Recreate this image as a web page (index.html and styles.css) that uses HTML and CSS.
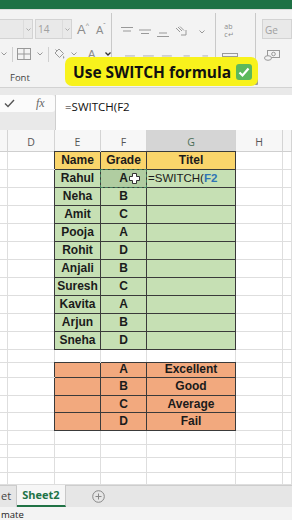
FILE: index.html
```html
<!DOCTYPE html>
<html lang="en">
<head>
    <meta charset="UTF-8">
    <meta name="viewport" content="width=device-width, initial-scale=1.0">
    <title>Use SWITCH formula</title>
    <link rel="stylesheet" href="styles.css">
</head>
<body>
    <div class="titlebar"></div>

    <!-- Ribbon (greyed out while the cell is in edit mode) -->
    <div class="ribbon">
        <div class="group font-group">
            <div class="rrow row-one">
                <div class="combo name-combo"><span class="field"></span><span class="drop"><svg width="5" height="3" viewBox="0 0 5 3"><path d="M0.5 0.5L2.5 2.5L4.5 0.5" fill="none" stroke="#aaa"/></svg></span></div>
                <div class="combo size-combo"><span class="field">14</span><span class="drop"><svg width="5" height="3" viewBox="0 0 5 3"><path d="M0.5 0.5L2.5 2.5L4.5 0.5" fill="none" stroke="#aaa"/></svg></span></div>
                <span class="grow">A<sup>^</sup></span>
                <span class="shrink">A<sup>ˇ</sup></span>
            </div>
            <div class="rrow row-two">
                <svg class="chev" width="6" height="4" viewBox="0 0 6 4"><path d="M0.5 0.5L3 3L5.5 0.5" fill="none" stroke="#999"/></svg>
                <span class="vsep"></span>
                <svg class="icon" width="14" height="12" viewBox="0 0 14 12"><rect x="0.5" y="0.5" width="13" height="11" fill="none" stroke="#999"/><path d="M7 0.5V11.5M0.5 6H13.5" stroke="#999"/></svg>
                <svg class="chev" width="6" height="4" viewBox="0 0 6 4"><path d="M0.5 0.5L3 3L5.5 0.5" fill="none" stroke="#999"/></svg>
                <span class="vsep"></span>
                <svg class="icon" width="12" height="12" viewBox="0 0 12 12"><path d="M2 5L6 1L10.5 5.5L6.5 9.5Z M4 3L2.5 1.5" fill="none" stroke="#999"/><path d="M10.5 7.5C11.5 9 11.5 10 10.8 10.5C10 10.8 9.6 10 10.5 7.5Z" fill="#999"/></svg>
                <svg class="chev" width="6" height="4" viewBox="0 0 6 4"><path d="M0.5 0.5L3 3L5.5 0.5" fill="none" stroke="#999"/></svg>
                <span class="font-color">A</span>
                <svg class="chev dark" width="6" height="4" viewBox="0 0 6 4"><path d="M0.5 0.5L3 3L5.5 0.5" fill="none" stroke="#333" stroke-width="1.3"/></svg>
            </div>
            <div class="glabel">Font</div>
        </div>

        <div class="group align-group">
            <div class="rrow row-one">
                <svg width="12" height="12" viewBox="0 0 12 12"><path d="M0 1.5H12M2 5H10" stroke="#999"/></svg>
                <svg width="12" height="12" viewBox="0 0 12 12"><path d="M0 4H12M2 7.5H10" stroke="#999"/></svg>
                <svg width="12" height="12" viewBox="0 0 12 12"><path d="M2 7H10M0 10.5H12" stroke="#999"/></svg>
                <svg width="12" height="12" viewBox="0 0 12 12"><path d="M1 2L5 6M3 1L7 5M5 0.5L9 4.5M6 9L11 9L11 4" fill="none" stroke="#999"/></svg>
                <svg class="chev" width="6" height="4" viewBox="0 0 6 4"><path d="M0.5 0.5L3 3L5.5 0.5" fill="none" stroke="#999"/></svg>
            </div>
            <div class="rrow row-two">
                <svg width="12" height="12" viewBox="0 0 12 12"><path d="M0 1.5H11M0 4.5H8M0 7.5H11M0 10.5H8" stroke="#aaa"/></svg>
                <svg width="12" height="12" viewBox="0 0 12 12"><path d="M0 1.5H12M2 4.5H10M0 7.5H12M2 10.5H10" stroke="#aaa"/></svg>
                <svg width="12" height="12" viewBox="0 0 12 12"><path d="M1 1.5H12M4 4.5H12M1 7.5H12M4 10.5H12" stroke="#aaa"/></svg>
                <svg width="12" height="12" viewBox="0 0 12 12"><path d="M5 1.5H12M7 4.5H12M7 7.5H12M5 10.5H12" stroke="#aaa"/><path d="M0.5 6H5M2.5 4L0.5 6L2.5 8" fill="none" stroke="#7a9cc6"/></svg>
                <svg width="13" height="12" viewBox="0 0 13 12"><path d="M6 1.5H13M8 4.5H13M8 7.5H13M6 10.5H13" stroke="#aaa"/><path d="M0.5 6H5M3 4L5 6L3 8" fill="none" stroke="#7a9cc6"/></svg>
            </div>
        </div>

        <div class="group wrap-group">
            <div class="rrow row-one">
                <span class="wrap-icon"><span>ab</span><span>c↵</span></span>
            </div>
            <div class="rrow row-two">
                <svg width="16" height="12" viewBox="0 0 16 12"><rect x="0.5" y="0.5" width="15" height="11" fill="none" stroke="#999"/><path d="M0.5 3.5H15.5M0.5 8.5H15.5" stroke="#999"/><path d="M3 6H13M5 4.5L3 6L5 7.5M11 4.5L13 6L11 7.5" fill="none" stroke="#7a9cc6"/></svg>
                <svg class="chev" width="6" height="4" viewBox="0 0 6 4"><path d="M0.5 0.5L3 3L5.5 0.5" fill="none" stroke="#999"/></svg>
            </div>
            <svg class="launcher" width="7" height="7" viewBox="0 0 7 7"><path d="M0.5 3V0.5H6.5V6.5H3.5M2 2L6 6M6 3.5V6H3.5" fill="none" stroke="#999"/></svg>
        </div>

        <div class="group number-group">
            <div class="rrow row-one">
                <div class="combo fmt-combo"><span class="field">Ge</span></div>
            </div>
            <div class="rrow row-two">
                <svg width="16" height="11" viewBox="0 0 16 11"><rect x="3.5" y="0.5" width="12" height="7" fill="none" stroke="#999"/><circle cx="9.5" cy="4" r="1.8" fill="none" stroke="#999"/><ellipse cx="4" cy="8" rx="3.5" ry="2.3" fill="#f3f3f3" stroke="#999"/></svg>
            </div>
        </div>
    </div>

    <div class="ribbon-gap"></div>

    <!-- Formula bar -->
    <div class="formula-bar">
        <div class="fx-side">
            <div class="fx-buttons">
                <svg class="tick" width="11" height="9" viewBox="0 0 11 9"><path d="M1 4.5L4 7.5L10 1" fill="none" stroke="#555" stroke-width="1.4"/></svg>
                <span class="fx">fx</span>
            </div>
        </div>
        <div class="fx-input">=SWITCH(F2</div>
    </div>

    <!-- Column headers -->
    <div class="row col-heads">
        <div class="cell c"></div>
        <div class="cell d">D</div>
        <div class="cell e">E</div>
        <div class="cell f">F</div>
        <div class="cell g active">G</div>
        <div class="cell h">H</div>
        <div class="cell i"></div>
    </div>

    <!-- Sheet grid -->
    <div class="grid">
        <div class="row r18">
            <div class="cell c"></div><div class="cell d"></div>
            <div class="cell e t hd first top">Name</div>
            <div class="cell f t hd top">Grade</div>
            <div class="cell g t hd top">Titel</div>
            <div class="cell h"></div><div class="cell i"></div>
        </div>
        <div class="row r18">
            <div class="cell c"></div><div class="cell d"></div>
            <div class="cell e t gr first">Rahul</div>
            <div class="cell f t gr sel">A<svg class="cursor" width="11" height="11" viewBox="0 0 11 11"><path d="M3.5 0.5H7.5V3.5H10.5V7.5H7.5V10.5H3.5V7.5H0.5V3.5H3.5Z" fill="#fff" stroke="#333"/></svg></div>
            <div class="cell g t gr editing">=SWITCH(<b>F2</b></div>
            <div class="cell h"></div><div class="cell i"></div>
        </div>
        <div class="row r18">
            <div class="cell c"></div><div class="cell d"></div>
            <div class="cell e t gr first">Neha</div><div class="cell f t gr">B</div><div class="cell g t gr"></div>
            <div class="cell h"></div><div class="cell i"></div>
        </div>
        <div class="row r18">
            <div class="cell c"></div><div class="cell d"></div>
            <div class="cell e t gr first">Amit</div><div class="cell f t gr">C</div><div class="cell g t gr"></div>
            <div class="cell h"></div><div class="cell i"></div>
        </div>
        <div class="row r18">
            <div class="cell c"></div><div class="cell d"></div>
            <div class="cell e t gr first">Pooja</div><div class="cell f t gr">A</div><div class="cell g t gr"></div>
            <div class="cell h"></div><div class="cell i"></div>
        </div>
        <div class="row r18">
            <div class="cell c"></div><div class="cell d"></div>
            <div class="cell e t gr first">Rohit</div><div class="cell f t gr">D</div><div class="cell g t gr"></div>
            <div class="cell h"></div><div class="cell i"></div>
        </div>
        <div class="row r18">
            <div class="cell c"></div><div class="cell d"></div>
            <div class="cell e t gr first">Anjali</div><div class="cell f t gr">B</div><div class="cell g t gr"></div>
            <div class="cell h"></div><div class="cell i"></div>
        </div>
        <div class="row r18">
            <div class="cell c"></div><div class="cell d"></div>
            <div class="cell e t gr first">Suresh</div><div class="cell f t gr">C</div><div class="cell g t gr"></div>
            <div class="cell h"></div><div class="cell i"></div>
        </div>
        <div class="row r18">
            <div class="cell c"></div><div class="cell d"></div>
            <div class="cell e t gr first">Kavita</div><div class="cell f t gr">A</div><div class="cell g t gr"></div>
            <div class="cell h"></div><div class="cell i"></div>
        </div>
        <div class="row r18">
            <div class="cell c"></div><div class="cell d"></div>
            <div class="cell e t gr first">Arjun</div><div class="cell f t gr">B</div><div class="cell g t gr"></div>
            <div class="cell h"></div><div class="cell i"></div>
        </div>
        <div class="row r18">
            <div class="cell c"></div><div class="cell d"></div>
            <div class="cell e t gr first">Sneha</div><div class="cell f t gr">D</div><div class="cell g t gr"></div>
            <div class="cell h"></div><div class="cell i"></div>
        </div>
        <div class="row r13">
            <div class="cell c"></div><div class="cell d"></div><div class="cell e"></div><div class="cell f"></div>
            <div class="cell g"></div><div class="cell h"></div><div class="cell i"></div>
        </div>

        <!-- Lookup values -->
        <div class="row r15">
            <div class="cell c"></div><div class="cell d"></div>
            <div class="cell e t or first top"></div><div class="cell f t or top">A</div><div class="cell g t or top">Excellent</div>
            <div class="cell h"></div><div class="cell i"></div>
        </div>
        <div class="row r18">
            <div class="cell c"></div><div class="cell d"></div>
            <div class="cell e t or first"></div><div class="cell f t or">B</div><div class="cell g t or">Good</div>
            <div class="cell h"></div><div class="cell i"></div>
        </div>
        <div class="row r17">
            <div class="cell c"></div><div class="cell d"></div>
            <div class="cell e t or first"></div><div class="cell f t or">C</div><div class="cell g t or">Average</div>
            <div class="cell h"></div><div class="cell i"></div>
        </div>
        <div class="row r18">
            <div class="cell c"></div><div class="cell d"></div>
            <div class="cell e t or first"></div><div class="cell f t or">D</div><div class="cell g t or">Fail</div>
            <div class="cell h"></div><div class="cell i"></div>
        </div>

        <div class="row r14">
            <div class="cell c"></div><div class="cell d"></div><div class="cell e"></div><div class="cell f"></div>
            <div class="cell g"></div><div class="cell h"></div><div class="cell i"></div>
        </div>
        <div class="row r13">
            <div class="cell c"></div><div class="cell d"></div><div class="cell e"></div><div class="cell f"></div>
            <div class="cell g"></div><div class="cell h"></div><div class="cell i"></div>
        </div>
        <div class="row r15">
            <div class="cell c"></div><div class="cell d"></div><div class="cell e"></div><div class="cell f"></div>
            <div class="cell g"></div><div class="cell h"></div><div class="cell i"></div>
        </div>
        <div class="row r12">
            <div class="cell c"></div><div class="cell d"></div><div class="cell e"></div><div class="cell f"></div>
            <div class="cell g"></div><div class="cell h"></div><div class="cell i"></div>
        </div>
    </div>

    <!-- Sheet tabs and status bar -->
    <div class="tabs">
        <div class="tab prev">et</div>
        <div class="tab current">Sheet2</div>
        <svg class="add-sheet" width="13" height="13" viewBox="0 0 13 13"><circle cx="6.5" cy="6.5" r="5.8" fill="none" stroke="#888"/><path d="M6.5 3.5V9.5M3.5 6.5H9.5" stroke="#888"/></svg>
    </div>
    <div class="status">mate</div>

    <div class="caption">Use SWITCH formula <svg class="check" width="16" height="16" viewBox="0 0 16 16"><rect width="16" height="16" rx="3" fill="#5cb85c"/><path d="M3.5 8.5L6.5 11.5L12.5 4.5" fill="none" stroke="#fff" stroke-width="2.2"/></svg></div>
</body>
</html>
```

FILE: styles.css
```css
/* Basic layout for the spreadsheet screen */
* {
    box-sizing: border-box;
}
body {
    margin: 0;
    width: 292px;
    height: 520px;
    overflow: hidden;
    position: relative;
    font-family: "Open Sans", sans-serif;
    background-color: #fff;
    color: #222;
}
.titlebar {
    height: 9px;
    background-color: #1e7145;
}

/* Ribbon */
.ribbon {
    height: 79px;
    display: flex;
    background-color: #f3f3f3;
    border-top: 1px solid #dcdcdc;
    border-bottom: 1px solid #d2d2d2;
    overflow: hidden;
}
.group {
    position: relative;
    margin: 3px 0 3px;
    border-right: 1px solid #c9c9c9;
}
.rrow {
    display: flex;
    align-items: center;
}
.row-one {
    height: 20px;
    margin-top: 6px;
}
.row-two {
    height: 14px;
    margin-top: 8px;
}
.font-group {
    width: 118px;
}
.combo {
    display: flex;
    height: 20px;
    background-color: #e9e9e9;
    border: 1px solid #d3d3d3;
}
.combo .field {
    flex: 1;
    font-size: 10px;
    color: #a0a0a0;
    padding: 2px 0 0 2px;
}
.combo .drop {
    width: 9px;
    display: flex;
    align-items: center;
    justify-content: center;
    border-left: 1px solid #dcdcdc;
}
.name-combo {
    width: 34px;
    margin-left: -1px;
}
.size-combo {
    width: 37px;
    margin-left: 2px;
}
.grow, .shrink {
    color: #8c8c8c;
    font-family: "Liberation Sans", sans-serif;
    line-height: 1;
}
.grow {
    font-size: 13px;
    margin-left: 5px;
}
.shrink {
    font-size: 11px;
    margin-left: 7px;
}
.grow sup, .shrink sup {
    font-size: 7px;
    vertical-align: 6px;
}
.font-group .row-two .chev:first-child {
    margin-left: 1px;
}
.vsep {
    width: 1px;
    height: 15px;
    background-color: #d0d0d0;
    margin: 0 4px 0 5px;
}
.chev {
    margin-left: 6px;
}
.chev.dark {
    margin-left: 10px;
}
.font-color {
    margin-left: 11px;
    font-family: "Liberation Sans", sans-serif;
    font-size: 11px;
    color: #8c8c8c;
}
.glabel {
    font-size: 9.5px;
    color: #444;
    margin: 10px 0 0 10px;
}
.align-group {
    width: 104px;
    padding-left: 9px;
}
.align-group svg {
    margin-right: 6px;
}
.align-group .row-one {
    margin-top: 9px;
}
.align-group .row-two {
    margin-top: 11px;
    padding-left: 4px;
}
.align-group .row-two svg {
    margin-right: 7px;
}
.wrap-group {
    width: 47px;
    padding-left: 6px;
}
.wrap-icon {
    display: flex;
    flex-direction: column;
    font-size: 7px;
    line-height: 8px;
    color: #8c8c8c;
    padding-left: 2px;
}
.wrap-group .row-one {
    margin-top: 8px;
}
.wrap-group .row-two {
    margin-top: 11px;
}
.launcher {
    position: absolute;
    left: 35px;
    top: 65px;
}
.number-group {
    flex: 1;
    border-right: none;
    padding-left: 6px;
}
.fmt-combo {
    width: 30px;
}
.fmt-combo .field {
    font-size: 10px;
    padding-top: 3px;
}
.number-group .row-two {
    margin-top: 9px;
    padding-left: 2px;
}
.ribbon-gap {
    height: 7px;
    background-color: #e9e9e9;
}

/* Formula bar */
.formula-bar {
    height: 35px;
    display: flex;
    background-color: #e9e9e9;
}
.fx-side {
    width: 55px;
}
.fx-buttons {
    height: 17px;
    display: flex;
    align-items: center;
    background-color: #fbfbfb;
    border-radius: 0 3px 3px 0;
}
.tick {
    margin-left: 4px;
}
.fx {
    margin-left: 21px;
    font-family: "Liberation Serif", serif;
    font-style: italic;
    font-size: 12px;
    color: #666;
}
.fx-input {
    flex: 1;
    background-color: #fff;
    border-left: 1px solid #cfcfcf;
    font-size: 11.5px;
    padding: 4px 0 0 9px;
    color: #111;
}

/* Grid */
.row {
    display: flex;
}
.cell {
    flex-shrink: 0;
    height: 100%;
    border-right: 1px solid #dedede;
    border-bottom: 1px solid #dedede;
    font-family: "Liberation Sans", sans-serif;
    font-size: 12px;
    text-align: center;
    white-space: nowrap;
}
.c { width: 8px; }
.d { width: 47px; }
.e { width: 46px; }
.f { width: 46px; }
.g { width: 89px; }
.h { width: 47px; }
.i { flex: 1; }
.col-heads {
    height: 22px;
    background-color: #f7f7f7;
}
.col-heads .cell {
    font-family: "Open Sans", sans-serif;
    font-size: 10.5px;
    color: #555;
    line-height: 24px;
    border-right-color: #d4d4d4;
    border-bottom-color: #cfcfcf;
}
.col-heads .active {
    background-color: #d5d5d5;
    color: #4a6f58;
}
.r18 { height: 18px; }
.r17 { height: 17px; }
.r15 { height: 15px; }
.r14 { height: 14px; }
.r13 { height: 13px; }
.r12 { height: 12px; }
.t {
    font-weight: bold;
    color: #1b1b1b;
    border-right-color: #3a3a3a;
    border-bottom-color: #3a3a3a;
    line-height: 17px;
}
.r15 .t { line-height: 13px; }
.t.first { box-shadow: -1px 0 0 #3a3a3a; }
.t.top { box-shadow: 0 -1px 0 #3a3a3a; }
.t.first.top { box-shadow: -1px -1px 0 #3a3a3a; }
.hd { background-color: #fad56b; }
.gr { background-color: #c6e0b4; }
.or { background-color: #f2a97e; }
.sel {
    position: relative;
    background-color: #b0cda1;
}
.sel::after {
    content: "";
    position: absolute;
    left: -1px;
    top: -1px;
    right: -1px;
    bottom: -1px;
    border: 1px dashed #3f7f5c;
}
.cursor {
    position: absolute;
    left: 28px;
    top: 3px;
}
.editing {
    text-align: left;
    font-weight: normal;
    font-size: 11.5px;
    padding-left: 1px;
}
.editing b {
    color: #2f74b5;
}

/* Sheet tabs */
.tabs {
    height: 22px;
    display: flex;
    align-items: stretch;
    background-color: #e6e6e6;
    border-top: 1px solid #cdcdcd;
}
.tab {
    font-size: 11px;
    line-height: 20px;
}
.tab.prev {
    width: 17px;
    color: #444;
    padding-left: 1px;
    border-right: 1px solid #c8c8c8;
}
.tab.current {
    width: 49px;
    text-align: center;
    font-weight: bold;
    color: #217346;
    background-color: #f6f6f6;
    border-right: 1px solid #c8c8c8;
    border-bottom: 2px solid #217346;
    margin-top: -1px;
}
.add-sheet {
    margin: 4px 0 0 26px;
}
.status {
    height: 13px;
    background-color: #f3f3f3;
    font-size: 9.5px;
    line-height: 15px;
    color: #222;
    padding-left: 1px;
}

/* Caption on top of the video */
.caption {
    position: absolute;
    left: 65px;
    top: 57px;
    width: 193px;
    height: 29px;
    border-radius: 7px;
    background-color: #f8f21c;
    font-family: "Open Sans", sans-serif;
    font-weight: bold;
    font-size: 15.5px;
    color: #111;
    display: flex;
    align-items: center;
    padding-left: 8px;
    white-space: nowrap;
}
.check {
    margin-left: 5px;
}
```
